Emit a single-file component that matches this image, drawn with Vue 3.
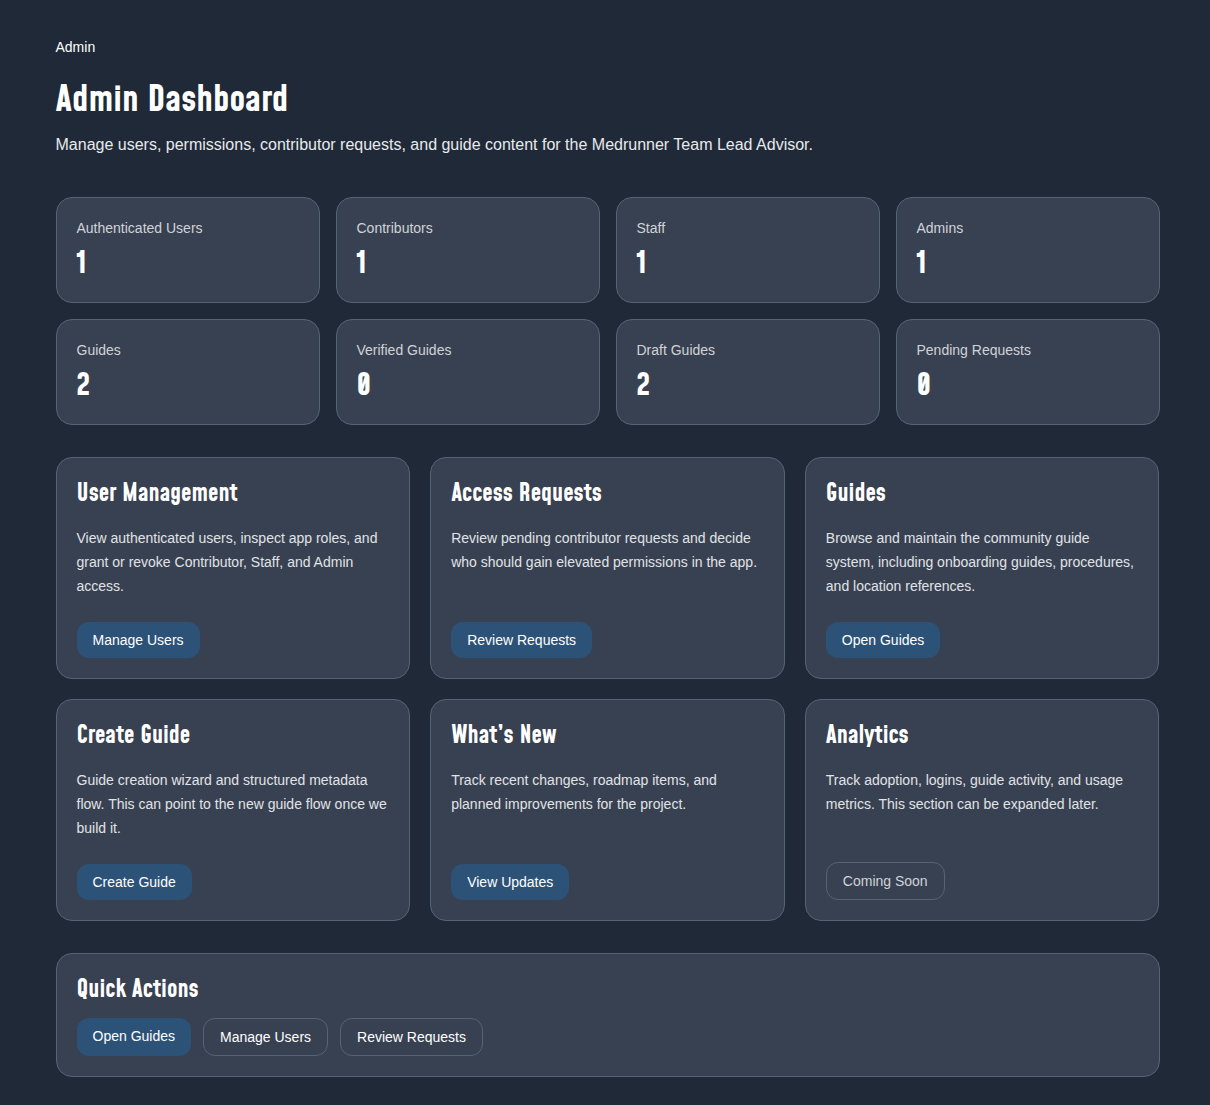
<template>
  <div class="admin-page">
    <main class="container">
      <header class="page-header">
        <p class="eyebrow">Admin</p>
        <h1 class="page-title">Admin Dashboard</h1>
        <p class="page-intro">
          Manage users, permissions, contributor requests, and guide content for the Medrunner Team Lead Advisor.
        </p>
      </header>

      <section class="stats" aria-label="Statistics">
        <div v-for="stat in stats" :key="stat.label" class="panel">
          <p class="stat-label">{{ stat.label }}</p>
          <p class="stat-value">{{ stat.value }}</p>
        </div>
      </section>

      <section class="cards" aria-label="Admin sections">
        <article v-for="card in cards" :key="card.title" class="panel card">
          <h2 class="panel-title">{{ card.title }}</h2>
          <p class="card-text">{{ card.text }}</p>
          <div class="card-action">
            <a v-if="card.href" class="btn btn-primary" :href="card.href">{{ card.action }}</a>
            <button v-else class="btn btn-outline" type="button" disabled>{{ card.action }}</button>
          </div>
        </article>
      </section>

      <section class="panel">
        <h2 class="panel-title">Quick Actions</h2>
        <div class="quick-actions">
          <a class="btn btn-primary" href="#guides">Open Guides</a>
          <a class="btn btn-outline" href="#users">Manage Users</a>
          <a class="btn btn-outline" href="#requests">Review Requests</a>
        </div>
      </section>
    </main>
  </div>
</template>

<script setup>
const stats = [
  { label: 'Authenticated Users', value: 1 },
  { label: 'Contributors', value: 1 },
  { label: 'Staff', value: 1 },
  { label: 'Admins', value: 1 },
  { label: 'Guides', value: 2 },
  { label: 'Verified Guides', value: 0 },
  { label: 'Draft Guides', value: 2 },
  { label: 'Pending Requests', value: 0 }
]

const cards = [
  {
    title: 'User Management',
    text: 'View authenticated users, inspect app roles, and grant or revoke Contributor, Staff, and Admin access.',
    action: 'Manage Users',
    href: '#users'
  },
  {
    title: 'Access Requests',
    text: 'Review pending contributor requests and decide who should gain elevated permissions in the app.',
    action: 'Review Requests',
    href: '#requests'
  },
  {
    title: 'Guides',
    text: 'Browse and maintain the community guide system, including onboarding guides, procedures, and location references.',
    action: 'Open Guides',
    href: '#guides'
  },
  {
    title: 'Create Guide',
    text: 'Guide creation wizard and structured metadata flow. This can point to the new guide flow once we build it.',
    action: 'Create Guide',
    href: '#create'
  },
  {
    title: 'What’s New',
    text: 'Track recent changes, roadmap items, and planned improvements for the project.',
    action: 'View Updates',
    href: '#updates'
  },
  {
    title: 'Analytics',
    text: 'Track adoption, logins, guide activity, and usage metrics. This section can be expanded later.',
    action: 'Coming Soon'
  }
]
</script>

<style>
body {
  margin: 0;
  background: #1f2937;
}
</style>

<style scoped>
.admin-page {
  padding: 37px 0 28px 5px;
  font-family: "Liberation Sans", Arial, sans-serif;
  font-size: 14px;
  line-height: 20px;
  color: #fff;
}

.container {
  box-sizing: border-box;
  max-width: 1152px;
  margin: 0 auto;
  padding: 0 24px;
}

p,
h1,
h2 {
  margin: 0;
}

.page-header {
  margin-bottom: 40px;
}

.page-title,
.panel-title,
.stat-value {
  font-family: Mohave, "Roboto Condensed", "Open Sans Condensed", Roboto, sans-serif;
  font-weight: 700;
}

.page-title {
  margin: 24px 0 12px;
  font-size: 36px;
  line-height: 40px;
}

.page-intro {
  font-size: 16px;
  line-height: 24px;
  color: #e8eaed;
}

.panel {
  padding: 20px;
  background: #384152;
  border: 1px solid #526476;
  border-radius: 16px;
}

.panel-title {
  font-size: 24px;
  line-height: 32px;
}

/* Stat tiles */
.stats {
  display: grid;
  grid-template-columns: repeat(4, 1fr);
  gap: 16px;
  margin-bottom: 32px;
}

.stat-label {
  color: #d1d3d7;
}

.stat-value {
  margin-top: 8px;
  font-size: 30px;
  line-height: 36px;
}

/* Section cards */
.cards {
  display: grid;
  grid-template-columns: repeat(3, 1fr);
  gap: 20px;
  margin-bottom: 32px;
}

.card {
  display: flex;
  flex-direction: column;
}

.card-text {
  margin: 16px 0 24px;
  line-height: 24px;
  color: #e1e3e6;
}

.card-action {
  display: flex;
  margin-top: auto;
}

.quick-actions {
  display: flex;
  flex-wrap: wrap;
  gap: 12px;
  margin-top: 12px;
}

/* Buttons */
.btn {
  padding: 8px 16px;
  border: 0;
  border-radius: 12px;
  font-family: inherit;
  font-size: 14px;
  line-height: 20px;
  color: #fff;
  text-decoration: none;
  cursor: pointer;
}

.btn-primary {
  background: #2c5278;
}

.btn-primary:hover {
  background: #346090;
}

.btn-outline {
  border: 1px solid #526476;
  background: transparent;
}

.btn:disabled {
  color: #d1d3d7;
  cursor: default;
}
</style>
